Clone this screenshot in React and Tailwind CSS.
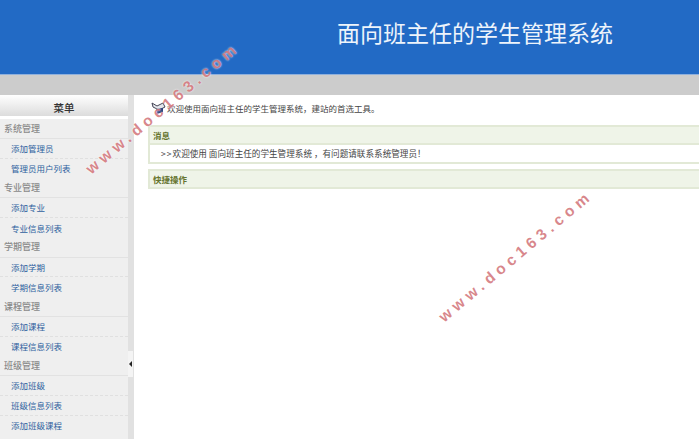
const MENU = [
  { title: "系统管理", items: ["添加管理员", "管理员用户列表"] },
  { title: "专业管理", items: ["添加专业", "专业信息列表"] },
  { title: "学期管理", items: ["添加学期", "学期信息列表"] },
  { title: "课程管理", items: ["添加课程", "课程信息列表"] },
  { title: "班级管理", items: ["添加班级", "班级信息列表", "添加班级课程"] },
];

const FONT = "font-['Noto_Sans_CJK_SC','Liberation_Sans',sans-serif]";

function Watermark({ className }) {
  return (
    <div
      className={`absolute origin-left -rotate-[40deg] whitespace-nowrap font-['Liberation_Sans',sans-serif] text-[15.5px] leading-[20px] font-bold tracking-[4.7px] text-[#cc5f66]/75 [text-shadow:0_0_2px_#fff] ${className}`}
    >
      www.doc163.com
    </div>
  );
}

function Panel({ title, children }) {
  return (
    <div className="border-y-2 border-l-2 border-[#e2e9d6]">
      <div className="flex h-[16px] items-center bg-[#eff4e8] pl-[3px] text-[8.5px] font-bold text-[#66752f]">
        {title}
      </div>
      {children}
    </div>
  );
}

export default function App() {
  return (
    <div className={`relative flex h-[439px] w-[699px] flex-col overflow-hidden bg-white ${FONT}`}>
      {/* Header */}
      <header className="flex h-[75px] shrink-0 items-start border-b border-[#8fb0dc] bg-[#226ac5] pl-[337px] pt-[18px]">
        <h1 className="font-['Noto_Sans_CJK_SC',serif] text-[23px] leading-[28px] font-normal text-[#eef4fb]">
          面向班主任的学生管理系统
        </h1>
      </header>
      <div className="h-[20px] shrink-0 bg-[#cccccc]" />

      <div className="flex min-h-0 flex-1">
        {/* Sidebar */}
        <aside className="flex w-[128px] shrink-0 flex-col overflow-hidden bg-[#efefef]">
          <div className="flex h-[24px] shrink-0 items-center justify-center border-b-[3px] border-white bg-gradient-to-b from-white to-[#dcdcdc] pt-[5px] text-[10.5px] leading-none font-medium text-[#333]">
            菜单
          </div>
          {MENU.map((group) => (
            <div key={group.title}>
              <div className="flex h-[19.8px] items-center border-b border-[#e2e2e2] pl-1 text-[9px] font-medium text-[#8a8a8a]">
                {group.title}
              </div>
              {group.items.map((item, i) => (
                <div
                  key={item}
                  className={`flex h-[19.8px] items-center pl-[11px] text-[8.5px] text-[#2e5f9e] ${
                    i < group.items.length - 1 ? "border-b border-dashed border-[#e0e0e0]" : ""
                  }`}
                >
                  {item}
                </div>
              ))}
            </div>
          ))}
        </aside>

        {/* Collapse strip */}
        <div className="flex w-[6px] shrink-0 flex-col items-start bg-[#e1e1e1] pt-[256px]">
          <div className="flex h-[26px] w-[5px] items-center justify-center bg-[#f4f4f4]">
            <div className="h-0 w-0 border-y-[3px] border-r-[3px] border-y-transparent border-r-[#222]" />
          </div>
        </div>

        {/* Main */}
        <main className="min-w-0 flex-1 pl-[14px]">
          <div className="flex h-[30px] items-center gap-[1px] pl-[3px] pb-[4px] text-[8.5px] text-[#444]">
            <svg width="15" height="13" viewBox="0 0 15 13">
              <path d="M1 1 L6 4 L12 1 L14 5 L8 8 L2 5 Z" fill="#e4e7ec" stroke="#445" strokeWidth="1" />
              <path d="M5 7 L12 6 L12 10 L6 12 Z" fill="#2b3f7a" />
            </svg>
            <span>欢迎使用面向班主任的学生管理系统，建站的首选工具。</span>
          </div>
          <Panel title="消息">
            <div className="flex h-[19px] items-center border-t-2 border-[#e2e9d6] pl-[11px] text-[8.6px] text-[#444]">
              <span className="tracking-[1px]">&gt;&gt;</span>
              <span>欢迎使用 面向班主任的学生管理系统 ，有问题请联系系统管理员！</span>
            </div>
          </Panel>
          <div className="mt-[5px]">
            <Panel title="快捷操作" />
          </div>
        </main>
      </div>

      {/* Watermarks */}
      <Watermark className="left-[88px] top-[161px]" />
      <Watermark className="left-[441px] top-[309px]" />
    </div>
  );
}
